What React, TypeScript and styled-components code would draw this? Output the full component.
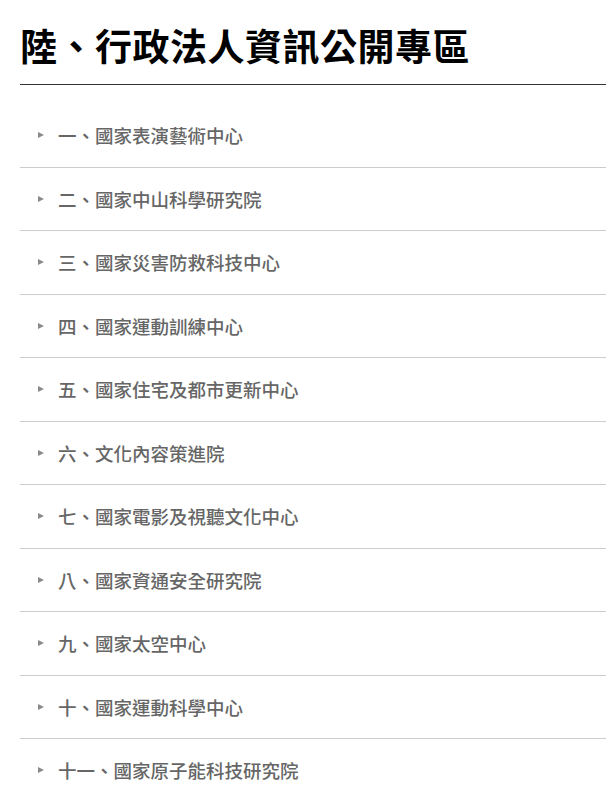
import styled, { createGlobalStyle } from "styled-components";

const GlobalStyle = createGlobalStyle`
  html, body {
    margin: 0;
    padding: 0;
    background: #ffffff;
  }
  body {
    font-family: "Noto Sans CJK TC", "Noto Sans", sans-serif;
  }
`;

const Page = styled.div`
  padding: 17px 0 0 20px;
`;

const Header = styled.div`
  border-bottom: 1px solid #333333;
  padding-bottom: 11px;
`;

const Title = styled.h2`
  margin: 0;
  font-size: 37px;
  line-height: 56px;
  font-weight: 700;
  letter-spacing: 0.5px;
  color: #000000;
`;

const List = styled.div`
  display: flex;
  flex-direction: column;
  margin-top: 19px;
`;

const Row = styled.div`
  display: flex;
  align-items: center;
  height: 62.5px;
  padding-left: 18px;
  border-bottom: 1px solid #cccccc;
  cursor: pointer;

  &:last-child {
    border-bottom: none;
  }
`;

const Arrow = styled.span`
  width: 0;
  height: 0;
  border-top: 3.5px solid transparent;
  border-bottom: 3.5px solid transparent;
  border-left: 6px solid #8a8a8a;
  margin-right: 14px;
  flex-shrink: 0;
`;

const Label = styled.span`
  font-size: 18.5px;
  line-height: 28px;
  font-weight: 500;
  color: #666666;
`;

const items = [
  "一、國家表演藝術中心",
  "二、國家中山科學研究院",
  "三、國家災害防救科技中心",
  "四、國家運動訓練中心",
  "五、國家住宅及都市更新中心",
  "六、文化內容策進院",
  "七、國家電影及視聽文化中心",
  "八、國家資通安全研究院",
  "九、國家太空中心",
  "十、國家運動科學中心",
  "十一、國家原子能科技研究院",
];

const App = () => {
  return (
    <>
      <GlobalStyle />
      <Page>
        <Header>
          <Title>陸、行政法人資訊公開專區</Title>
        </Header>
        <List>
          {items.map((item) => (
            <Row key={item}>
              <Arrow />
              <Label>{item}</Label>
            </Row>
          ))}
        </List>
      </Page>
    </>
  );
};

export default App;
